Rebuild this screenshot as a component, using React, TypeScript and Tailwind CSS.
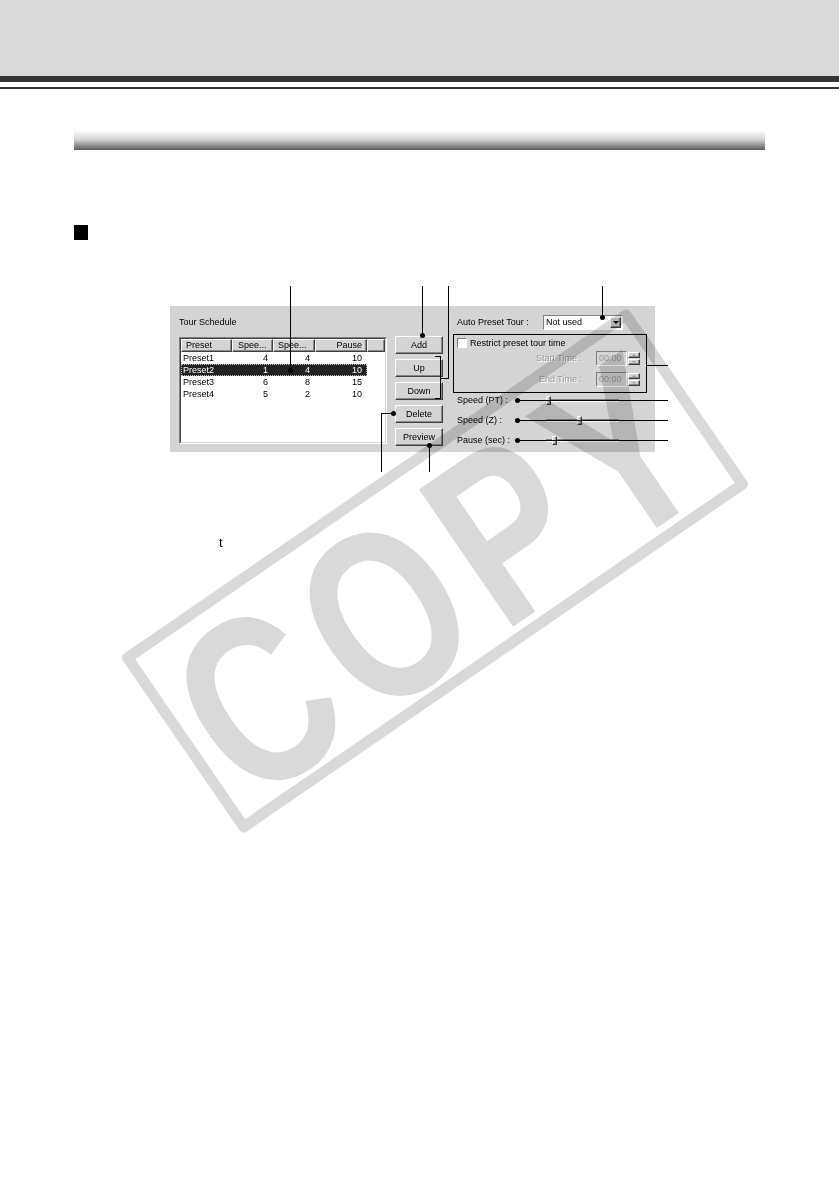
const rows = [
  { name: 'Preset1', a: '4', b: '4', p: '10' },
  { name: 'Preset2', a: '1', b: '4', p: '10', sel: true },
  { name: 'Preset3', a: '6', b: '8', p: '15' },
  { name: 'Preset4', a: '5', b: '2', p: '10' },
];

const buttons = ['Add', 'Up', 'Down', 'Delete', 'Preview'];

const sliders = [
  { label: 'Speed (PT) :', pos: 0 },
  { label: 'Speed (Z) :', pos: 31 },
  { label: 'Pause (sec) :', pos: 6 },
];

const raised = 'border border-t-white border-l-white border-r-[#404040] border-b-[#404040] shadow-[inset_-1px_-1px_0_#888]';
const sunken = 'border border-t-[#808080] border-l-[#808080] border-r-white border-b-white';

function HLine({ x, y, w }: { x: number; y: number; w: number }) {
  return <div className="absolute h-px bg-black" style={{ left: x, top: y, width: w }} />;
}
function VLine({ x, y, h }: { x: number; y: number; h: number }) {
  return <div className="absolute w-px bg-black" style={{ left: x, top: y, height: h }} />;
}
function Dot({ x, y }: { x: number; y: number }) {
  return <div className="absolute h-[5px] w-[5px] rounded-full bg-black" style={{ left: x - 2, top: y - 2 }} />;
}

function TimeRow({ label }: { label: string }) {
  return (
    <div className="flex h-[15px] items-center justify-end pr-[6px]">
      <span className="mr-[14px] text-[#9a9a9a] [text-shadow:1px_1px_0_#fff]">{label}</span>
      <div className={`flex h-[15px] w-[31px] items-center pl-[2px] text-[#9a9a9a] ${sunken}`}>00:00</div>
      <div className="flex h-[15px] w-[13px] flex-col justify-center gap-[1px] pl-[1px]">
        <div className={`flex h-[6px] items-center justify-center bg-[#d4d4d4] ${raised}`}>
          <div className="h-0 w-0 border-x-[2px] border-b-[2px] border-x-transparent border-b-[#9a9a9a]" />
        </div>
        <div className={`flex h-[6px] items-center justify-center bg-[#d4d4d4] ${raised}`}>
          <div className="h-0 w-0 border-x-[2px] border-t-[2px] border-x-transparent border-t-[#9a9a9a]" />
        </div>
      </div>
    </div>
  );
}

function Dialog() {
  return (
    <div className="flex h-[146px] w-[485px] bg-[#d4d4d4] pl-[9px] text-[9px] leading-[11px] text-black">
      <div className="flex w-[208px] flex-col">
        <div className="mt-[10px] h-[12px] leading-[12px]">Tour Schedule</div>
        <div className={`mt-[9px] h-[107px] ${sunken}`}>
          <div className="h-full border border-t-[#404040] border-l-[#404040] border-r-[#d4d4d4] border-b-[#d4d4d4] bg-white">
            <div className="flex h-[13px]">
              <div className={`w-[51px] bg-[#d4d4d4] pl-[4px] ${raised}`}>Preset</div>
              <div className={`w-[41px] bg-[#d4d4d4] pl-[5px] ${raised}`}>Spee...</div>
              <div className={`w-[42px] bg-[#d4d4d4] pl-[4px] ${raised}`}>Spee...</div>
              <div className={`w-[52px] bg-[#d4d4d4] pr-[4px] text-right ${raised}`}>Pause</div>
              <div className={`flex-1 bg-[#d4d4d4] ${raised}`} />
            </div>
            {rows.map(r => (
              <div
                key={r.name}
                className={`flex h-[12px] w-[186px] items-center ${r.sel ? 'border border-dotted border-[#bbb] bg-[#222] text-white' : 'border border-transparent'}`}
              >
                <div className="w-[50px] pl-[1px]">{r.name}</div>
                <div className="w-[41px] pr-[5px] text-right">{r.a}</div>
                <div className="w-[42px] pr-[5px] text-right">{r.b}</div>
                <div className="w-[51px] pr-[4px] text-right">{r.p}</div>
              </div>
            ))}
          </div>
        </div>
      </div>

      <div className="ml-[8px] mt-[30px] flex flex-col gap-[5px]">
        {buttons.map(b => (
          <div key={b} className={`flex h-[18px] w-[48px] items-center justify-center bg-[#d4d4d4] ${raised}`}>
            {b}
          </div>
        ))}
      </div>

      <div className="ml-[10px] mt-[9px] flex w-[194px] flex-col">
        <div className="flex h-[15px] items-center">
          <div className="w-[90px] pl-[4px]">Auto Preset Tour :</div>
          <div className={`flex h-[15px] w-[80px] items-center bg-white ${sunken}`}>
            <span className="flex-1 pl-[2px]">Not used</span>
            <div className={`mr-[1px] flex h-[11px] w-[11px] items-center justify-center bg-[#d4d4d4] ${raised}`}>
              <div className="h-0 w-0 border-x-[3px] border-t-[3px] border-x-transparent border-t-black" />
            </div>
          </div>
        </div>

        <div className="mt-[4px] flex h-[59px] flex-col border border-black">
          <div className="mt-[2px] flex h-[12px] items-center pl-[3px]">
            <div className={`h-[10px] w-[10px] bg-white ${sunken}`} />
            <span className="ml-[3px]">Restrict preset tour time</span>
          </div>
          <div className="mt-[2px]">
            <TimeRow label="Start Time :" />
          </div>
          <div className="mt-[6px]">
            <TimeRow label="End Time :" />
          </div>
        </div>

        <div className="flex flex-col gap-[6px]">
          {sliders.map(s => (
            <div key={s.label} className="flex h-[14px] items-center">
              <div className="w-[93px] pl-[4px]">{s.label}</div>
              <div className="relative h-[3px] w-[73px] border-t border-t-[#808080] border-b border-b-white bg-[#b8b8b8]">
                <div
                  className={`absolute top-[-4px] h-[9px] w-[5px] bg-[#d4d4d4] ${raised}`}
                  style={{ left: s.pos }}
                />
              </div>
            </div>
          ))}
        </div>
      </div>
    </div>
  );
}

function Callouts() {
  return (
    <>
      <VLine x={120} y={-20} h={84} />
      <Dot x={120} y={64} />

      <VLine x={252} y={-20} h={49} />
      <Dot x={252} y={29} />

      <VLine x={278} y={-20} h={92} />
      <HLine x={270} y={72} w={9} />
      <VLine x={270} y={50} h={43} />
      <HLine x={265} y={50} w={6} />
      <HLine x={265} y={92} w={6} />

      <VLine x={432} y={-20} h={31} />
      <Dot x={432} y={11} />

      <HLine x={477} y={59} w={21} />

      <HLine x={347} y={94} w={151} />
      <Dot x={347} y={94} />
      <HLine x={347} y={114} w={151} />
      <Dot x={347} y={114} />
      <HLine x={347} y={134} w={151} />
      <Dot x={347} y={134} />

      <HLine x={211} y={107} w={12} />
      <VLine x={211} y={107} h={59} />
      <Dot x={223} y={107} />

      <VLine x={259} y={139} h={27} />
      <Dot x={259} y={139} />
    </>
  );
}

export default function App() {
  return (
    <div className="relative min-h-[1190px] w-[839px] overflow-hidden bg-white font-['Liberation_Sans',Arial,sans-serif]">
      <div className="h-[76px] bg-[#d9d9d9]" />
      <div className="h-[6px] bg-[#333]" />
      <div className="mt-[5px] h-[2px] bg-[#333]" />

      <div className="ml-[74px] mt-[42px] h-[19px] w-[691px] bg-[linear-gradient(to_bottom,#fbfbfb_0%,#d2d2d2_45%,#5a5a5a_100%)]" />

      <div className="ml-[74px] mt-[75px] h-[15px] w-[14px] bg-black" />

      <div className="relative ml-[170px] mt-[66px] w-[485px]">
        <Dialog />
        <Callouts />
      </div>

      <div className="ml-[219px] mt-[84px] text-[13px] leading-[14px] text-black">t</div>

      <div className="pointer-events-none absolute left-[127px] top-[463px] flex h-[216px] w-[616px] rotate-[-34.5deg] items-center justify-center rounded-[5px] border-[11px] border-[#d9d9d9] mix-blend-multiply">
        <span className="ml-[10px] mt-[14px] inline-block scale-y-[1.3] font-['Liberation_Sans',Arial,sans-serif] text-[186px] font-bold leading-none tracking-[14px] text-[#d9d9d9]">
          COPY
        </span>
      </div>
    </div>
  );
}
